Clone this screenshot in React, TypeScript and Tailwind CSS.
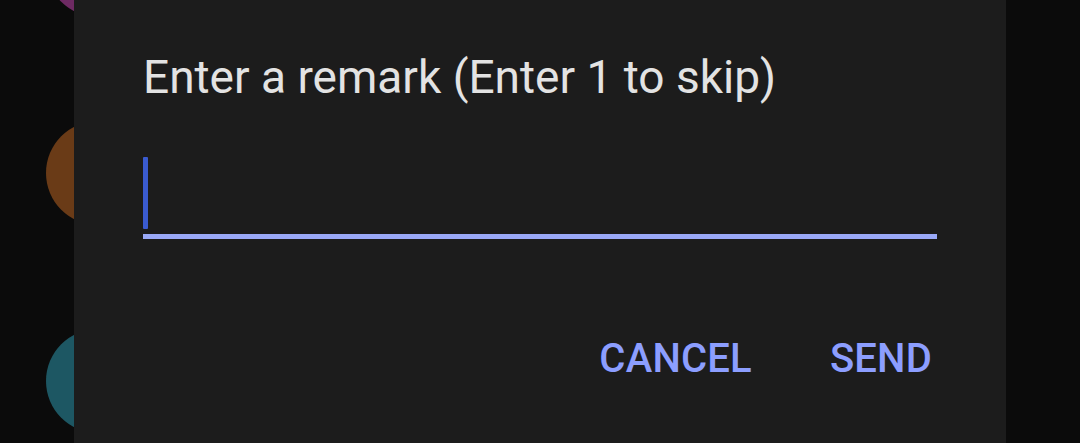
export default function App() {
  const avatars = ["bg-[#6e2a63]", "bg-[#6a3b17]", "bg-[#1d5763]"];

  return (
    <div className="relative h-[443px] w-[1080px] overflow-hidden bg-[#0b0b0b] font-['Roboto','Liberation_Sans',sans-serif]">
      {/* list behind the scrim */}
      <div className="-mt-[87px] flex flex-col gap-[104px] pl-[46px]">
        {avatars.map((c) => (
          <div key={c} className={`h-[104px] w-[104px] rounded-full ${c}`} />
        ))}
      </div>

      {/* dialog */}
      <div className="absolute inset-y-0 left-[74px] flex w-[932px] flex-col bg-[#1c1c1c] px-[69px] pt-[50px]">
        <h2 className="text-[46px] leading-[54px] font-normal text-[#e3e3e3]">Enter a remark (Enter 1 to skip)</h2>

        <div className="mt-[53px] flex flex-col">
          <div className="h-[72px] w-[5px] rounded-[1px] bg-[#3a5bd0]" />
          <div className="mt-[5px] h-[5px] w-full bg-[#9aa9f8]" />
        </div>

        <div className="mt-[96px] -mr-[34px] flex justify-end">
          <button className="px-[39px] text-[40px] leading-[48px] font-medium tracking-[0.2px] text-[#8c9eff]">CANCEL</button>
          <button className="px-[39px] text-[40px] leading-[48px] font-medium tracking-[0.2px] text-[#8c9eff]">SEND</button>
        </div>
      </div>
    </div>
  );
}
